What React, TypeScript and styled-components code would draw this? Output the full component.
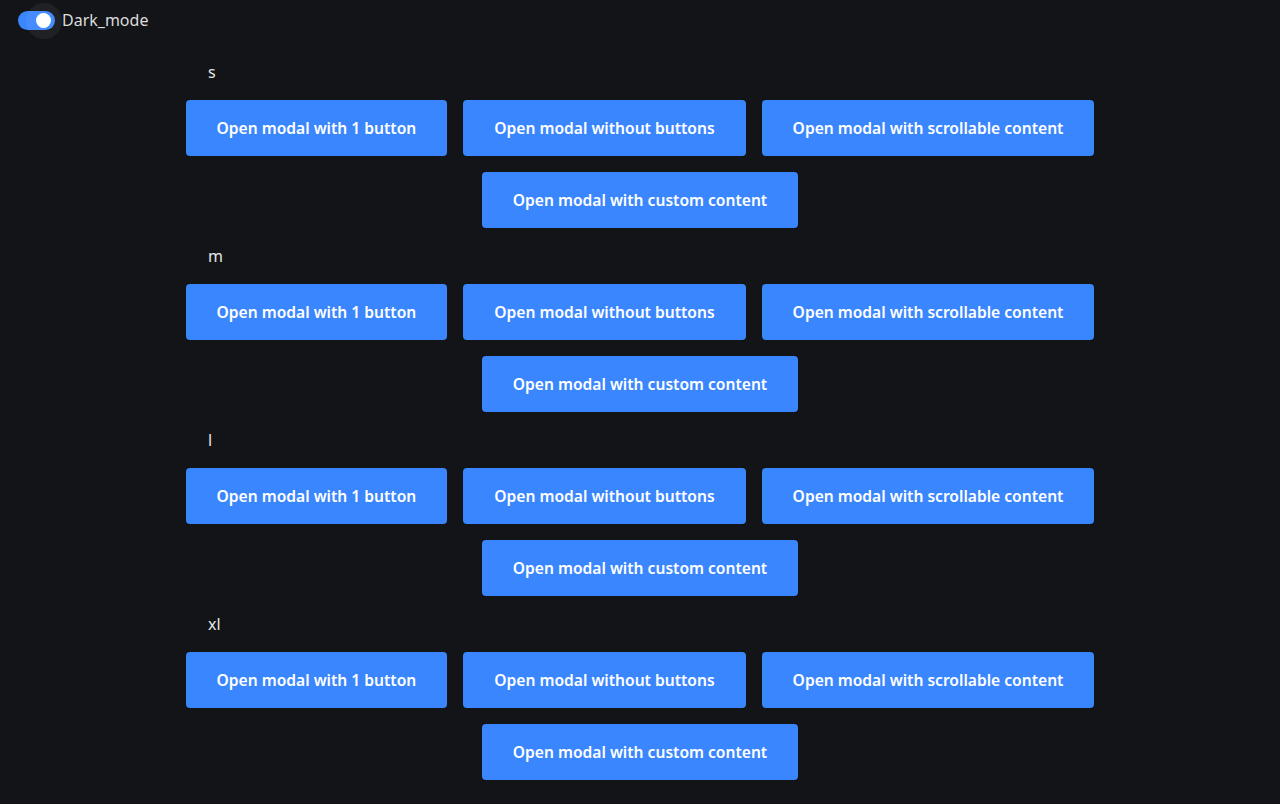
import React from "react";
import styled, { createGlobalStyle } from "styled-components";

const Global = createGlobalStyle`
  html, body { margin: 0; padding: 0; background: #131418; }
  body { font-family: "Noto Sans", "Open Sans", sans-serif; color: #e6e6e6; }
`;

const Page = styled.div`
  min-height: 804px;
  background: #131418;
  display: flex;
  flex-direction: column;
`;

const ToggleRow = styled.label`
  display: flex;
  align-items: center;
  gap: 7px;
  padding: 8px 0 0 18px;
  height: 24px;
  font-size: 16px;
  color: #dcdcdc;
`;

const Track = styled.span`
  position: relative;
  width: 37px;
  height: 19px;
  border-radius: 10px;
  background: #3a86ff;
  flex: none;
`;

const Halo = styled.span`
  position: absolute;
  left: 8px;
  top: -8px;
  width: 36px;
  height: 36px;
  border-radius: 50%;
  background: rgba(255, 255, 255, 0.06);
`;

const Knob = styled.span`
  position: absolute;
  left: 18px;
  top: 2px;
  width: 15px;
  height: 15px;
  border-radius: 50%;
  background: #ffffff;
`;

const Content = styled.div`
  width: 912px;
  margin: 28px auto 0;
  display: flex;
  flex-direction: column;
  gap: 16px;
`;

const SizeLabel = styled.div`
  padding-left: 24px;
  height: 24px;
  line-height: 24px;
  font-size: 16px;
  color: #e6e6e6;
`;

const ButtonRow = styled.div`
  display: flex;
  justify-content: center;
  gap: 16px;
`;

const Button = styled.button`
  flex: none;
  white-space: nowrap;
  height: 56px;
  padding: 0 31px;
  border: none;
  border-radius: 4px;
  background: #3a86ff;
  color: #ffffff;
  font-family: "Noto Sans", "Open Sans", sans-serif;
  font-weight: 600;
  font-size: 15.6px;
  cursor: pointer;
`;

const sizes = ["s", "m", "l", "xl"];

export default function App() {
  return (
    <Page>
      <Global />
      <ToggleRow>
        <Track>
          <Halo />
          <Knob />
        </Track>
        Dark_mode
      </ToggleRow>
      <Content>
        {sizes.map((s) => (
          <React.Fragment key={s}>
            <SizeLabel>{s}</SizeLabel>
            <ButtonRow>
              <Button>Open modal with 1 button</Button>
              <Button>Open modal without buttons</Button>
              <Button>Open modal with scrollable content</Button>
            </ButtonRow>
            <ButtonRow>
              <Button>Open modal with custom content</Button>
            </ButtonRow>
          </React.Fragment>
        ))}
      </Content>
    </Page>
  );
}
